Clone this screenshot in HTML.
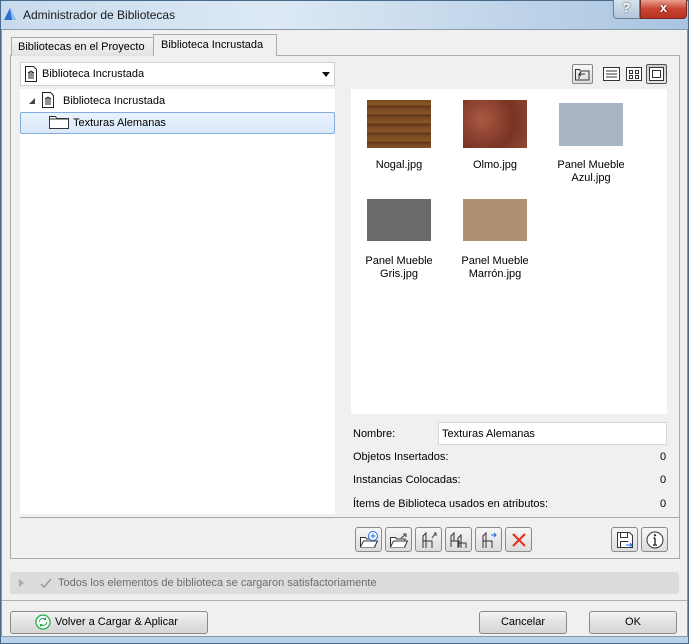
<!DOCTYPE html>
<html><head><meta charset="utf-8"><style>
*{box-sizing:border-box;margin:0;padding:0}
body{width:689px;height:644px;position:relative;overflow:hidden;font-family:"Liberation Sans",sans-serif;font-size:11px;color:#000;background:#f0f0f0}
.a{position:absolute}
.btn{position:absolute;border:1px solid #8a8a8a;border-radius:3px;background:linear-gradient(#f4f4f4,#e2e2e2 50%,#d6d6d6);text-align:center}
.ib{position:absolute;width:27px;height:25px;border:1px solid #8a8a8a;border-radius:3px;background:linear-gradient(#f6f6f6,#dcdcdc)}
.ib svg{position:absolute;left:3px;top:2px}
.t{position:absolute;white-space:nowrap}
</style></head><body>
<!-- window frame -->
<div class="a" style="left:0;top:0;width:689px;height:644px;border:1px solid #4a6a8a;background:#b9d1ea"></div>
<div class="a" style="left:1px;top:1px;width:687px;height:28px;background:linear-gradient(90deg,#c8dbee,#dce9f5 40%,#a9c4e0)"></div>
<svg class="a" style="left:3px;top:7px" width="14" height="14"><path d="M1 13 L7 1 L13 13 Z" fill="#2a6fd0"/><path d="M7 1 L13 13 L9 13 Z" fill="#8fc0f0"/></svg>
<div class="t" style="left:23px;top:8px;font-size:12px;color:#1a1a1a">Administrador de Bibliotecas</div>
<div class="a" style="left:613px;top:0;width:27px;height:19px;border:1px solid #6d7f94;border-top:none;border-radius:0 0 0 4px;background:linear-gradient(#d8e3ef,#b3c5d9);text-align:center;font-weight:bold;color:#fff;font-size:13px;text-shadow:0 0 2px #333">?</div>
<div class="a" style="left:640px;top:0;width:47px;height:19px;border:1px solid #7a2a22;border-top:none;border-radius:0 0 4px 0;background:linear-gradient(#e8a090,#c94433 50%,#b83020);text-align:center;font-weight:bold;color:#fff;font-size:13px;text-shadow:0 0 2px #400">x</div>
<div class="a" style="left:1px;top:29px;width:687px;height:608px;background:#f0f0f0;border:1px solid #8a9aaa"></div>
<!-- tabs -->
<div class="a" style="left:10px;top:55px;width:670px;height:504px;border:1px solid #aaa;background:#f0f0f0"></div>
<div class="a" style="left:11px;top:37px;width:143px;height:19px;border:1px solid #aaa;border-bottom:none;background:linear-gradient(#f2f2f2,#e3e3e3)"></div>
<div class="t" style="left:18px;top:41px">Bibliotecas en el Proyecto</div>
<div class="a" style="left:153px;top:34px;width:124px;height:22px;border:1px solid #aaa;border-bottom:none;background:#f0f0f0"></div>
<div class="t" style="left:161px;top:39px">Biblioteca Incrustada</div>
<!-- dropdown -->
<div class="a" style="left:20px;top:62px;width:315px;height:24px;border:1px solid #d0d0d0;background:#fff"></div>
<svg class="a" style="left:24px;top:66px" width="14" height="16"><path d="M1.5 .5h8l3 3v12h-11z" fill="#fff" stroke="#222"/><path d="M4 12h6M4 7h6M5 8v3M7 8v3M9 8v3M4 7l3-2 3 2" stroke="#222" fill="none"/></svg>
<div class="t" style="left:42px;top:68px">Biblioteca Incrustada</div>
<svg class="a" style="left:322px;top:72px" width="8" height="5"><path d="M0 0h8L4 5z" fill="#111"/></svg>
<!-- tree -->
<div class="a" style="left:20px;top:89px;width:315px;height:425px;background:#fff"></div>
<svg class="a" style="left:29px;top:98px" width="6" height="6"><path d="M6 0v6H0z" fill="#444"/></svg>
<svg class="a" style="left:41px;top:92px" width="14" height="16"><path d="M1.5 .5h8l3 3v12h-11z" fill="#fff" stroke="#222"/><path d="M4 12h6M4 7h6M5 8v3M7 8v3M9 8v3M4 7l3-2 3 2" stroke="#222" fill="none"/></svg>
<div class="t" style="left:63px;top:95px">Biblioteca Incrustada</div>
<div class="a" style="left:20px;top:112px;width:315px;height:22px;border:1px solid #84acdd;border-radius:2px;background:linear-gradient(#eaf3fd,#d9e8fb)"></div>
<svg class="a" style="left:49px;top:115px" width="20" height="15"><path d="M.5 1.5h6l1.5 2h11.5v10H.5z" fill="#fff" stroke="#333"/><path d="M.5 4h19" stroke="#333"/></svg>
<div class="t" style="left:73px;top:117px">Texturas Alemanas</div>
<!-- view icons -->
<div class="a" style="left:572px;top:64px;width:21px;height:20px;border:1px solid #888;border-radius:2px;background:linear-gradient(#f6f6f6,#ddd)"></div>
<svg class="a" style="left:575px;top:67px" width="15" height="14"><path d="M.5 2.5h4l1 1.5h8.5v9H.5z" fill="none" stroke="#333"/><path d="M4 12V7h6M4 7l2-2M4 7l2 2" stroke="#333" fill="none"/></svg>
<svg class="a" style="left:603px;top:67px" width="17" height="14"><rect x=".5" y=".5" width="16" height="13" fill="#fff" stroke="#333"/><path d="M3 4h11M3 7h11M3 10h11" stroke="#333"/></svg>
<svg class="a" style="left:626px;top:67px" width="16" height="14"><rect x=".5" y=".5" width="15" height="13" fill="#fff" stroke="#333"/><rect x="3.5" y="3.5" width="3" height="3" fill="none" stroke="#333"/><rect x="9.5" y="3.5" width="3" height="3" fill="none" stroke="#333"/><rect x="3.5" y="8.5" width="3" height="3" fill="none" stroke="#333"/><rect x="9.5" y="8.5" width="3" height="3" fill="none" stroke="#333"/></svg>
<div class="a" style="left:646px;top:64px;width:21px;height:20px;border:1px solid #555;border-radius:2px;background:linear-gradient(#ccc,#e6e6e6)"></div>
<svg class="a" style="left:649px;top:67px" width="15" height="14"><rect x=".5" y=".5" width="14" height="13" fill="#fff" stroke="#333"/><rect x="3.5" y="3.5" width="8" height="7" fill="none" stroke="#333"/></svg>
<!-- preview -->
<div class="a" style="left:351px;top:89px;width:316px;height:325px;background:#fff"></div>
<div class="a" style="left:367px;top:100px;width:64px;height:48px;background:repeating-linear-gradient(#7a4a22 0,#8a5528 5px,#5e3515 6px,#7a4a22 9px)"></div>
<div class="a" style="left:463px;top:100px;width:64px;height:48px;background:radial-gradient(circle at 30% 40%,#a95a42,#7a3324 60%,#8c4a35)"></div>
<div class="a" style="left:559px;top:103px;width:64px;height:43px;background:#a8b4c4"></div>
<div class="a" style="left:367px;top:199px;width:64px;height:42px;background:#6a6a6a"></div>
<div class="a" style="left:463px;top:199px;width:64px;height:42px;background:#b09070"></div>
<div class="t" style="left:351px;top:159px;width:96px;text-align:center">Nogal.jpg</div>
<div class="t" style="left:447px;top:159px;width:96px;text-align:center">Olmo.jpg</div>
<div class="t" style="left:543px;top:159px;width:96px;text-align:center;line-height:13px">Panel Mueble<br>Azul.jpg</div>
<div class="t" style="left:351px;top:255px;width:96px;text-align:center;line-height:13px">Panel Mueble<br>Gris.jpg</div>
<div class="t" style="left:447px;top:255px;width:96px;text-align:center;line-height:13px">Panel Mueble<br>Marrón.jpg</div>
<!-- fields -->
<div class="t" style="left:353px;top:428px">Nombre:</div>
<div class="a" style="left:438px;top:422px;width:229px;height:23px;border:1px solid #d8d8d8;background:#fff"></div>
<div class="t" style="left:442px;top:428px">Texturas Alemanas</div>
<div class="t" style="left:353px;top:451px">Objetos Insertados:</div><div class="t" style="left:660px;top:451px">0</div>
<div class="t" style="left:353px;top:474px">Instancias Colocadas:</div><div class="t" style="left:660px;top:474px">0</div>
<div class="t" style="left:353px;top:498px">Ítems de Biblioteca usados en atributos:</div><div class="t" style="left:660px;top:498px">0</div>
<div class="a" style="left:20px;top:517px;width:659px;height:1px;background:#aaa"></div>
<!-- action buttons -->
<div class="ib" style="left:355px;top:527px"><svg width="20" height="20"><path d="M1.5 7.5h5l1 1.5h8.5v8H1.5z" fill="#fff" stroke="#333"/><path d="M1.5 17l3-6h14l-3 6" fill="#fff" stroke="#333"/><circle cx="14" cy="6" r="4.5" fill="#fff" stroke="#1a6ee8"/><path d="M14 3.5v5M11.5 6h5" stroke="#1a6ee8"/></svg></div>
<div class="ib" style="left:385px;top:527px"><svg width="20" height="20"><path d="M1.5 7.5h5l1 1.5h8.5v8H1.5z" fill="#fff" stroke="#333"/><path d="M1.5 17l3-6h14l-3 6" fill="#fff" stroke="#333"/><path d="M12 8l4-3M14 4h3v3" stroke="#333" fill="none"/></svg></div>
<div class="ib" style="left:415px;top:527px"><svg width="20" height="20"><path d="M4 18V6l3-3v8h6v7M4 11h9M7 11v7" stroke="#333" fill="none"/><path d="M13 8l3-4M15 3h2v3" stroke="#333" fill="none"/></svg></div>
<div class="ib" style="left:445px;top:527px"><svg width="20" height="20"><path d="M2 17V6l3-3v8h5v6M2 11h8" stroke="#333" fill="none"/><path d="M9 18V8l3-3v8h5v5M9 13h8M12 13v5" stroke="#333" fill="none"/></svg></div>
<div class="ib" style="left:475px;top:527px"><svg width="20" height="20"><path d="M4 18V6l3-3v8h6v7M4 11h9M7 11v7" stroke="#333" fill="none"/><path d="M12 5h5M15 3l2 2-2 2" stroke="#1a6ee8" fill="none"/></svg></div>
<div class="ib" style="left:505px;top:527px"><svg width="20" height="20"><path d="M4 4l12 12M16 4L4 16" stroke="#e8321e" stroke-width="2.2"/></svg></div>
<div class="ib" style="left:611px;top:527px"><svg width="20" height="20"><path d="M2.5 2.5h12l3 3v12h-15z" fill="#fff" stroke="#333"/><path d="M5.5 2.5v5h7v-5M5.5 17.5v-6h8" stroke="#333" fill="none"/><path d="M11 15h6M15 13l2 2-2 2" stroke="#1a6ee8" fill="none"/></svg></div>
<div class="ib" style="left:641px;top:527px"><svg width="20" height="20"><circle cx="10" cy="10" r="8" fill="#fff" stroke="#333"/><path d="M10 8v7M8 15h4M8.5 8h1.5" stroke="#333" stroke-width="1.5"/><circle cx="10" cy="5.3" r="1.2" fill="#333"/></svg></div>
<!-- status -->
<div class="a" style="left:10px;top:572px;width:669px;height:22px;border-radius:3px;background:#dcdcdc"></div>
<svg class="a" style="left:19px;top:579px" width="5" height="8"><path d="M0 0l5 4-5 4z" fill="#aaa"/></svg>
<svg class="a" style="left:40px;top:578px" width="12" height="10"><path d="M1 6l3 3 7-8" stroke="#999" stroke-width="1.5" fill="none"/></svg>
<div class="t" style="left:58px;top:577px;color:#6d6d6d">Todos los elementos de biblioteca se cargaron satisfactoriamente</div>
<div class="a" style="left:2px;top:600px;width:685px;height:1px;background:#b0b0b0"></div>
<!-- bottom buttons -->
<div class="btn" style="left:10px;top:611px;width:198px;height:23px"></div>
<svg class="a" style="left:35px;top:614px" width="16" height="16"><circle cx="8" cy="8" r="7" fill="#fff" stroke="#1fae4a" stroke-width="1.3"/><path d="M4.5 8a3.5 3.5 0 0 1 6-2.5M11.5 8a3.5 3.5 0 0 1-6 2.5M10.5 3.5v2h-2M5.5 12.5v-2h2" stroke="#1fae4a" fill="none"/></svg>
<div class="t" style="left:55px;top:616px">Volver a Cargar &amp; Aplicar</div>
<div class="btn" style="left:479px;top:611px;width:88px;height:23px;line-height:21px">Cancelar</div>
<div class="btn" style="left:589px;top:611px;width:88px;height:23px;line-height:21px">OK</div>
</body></html>
